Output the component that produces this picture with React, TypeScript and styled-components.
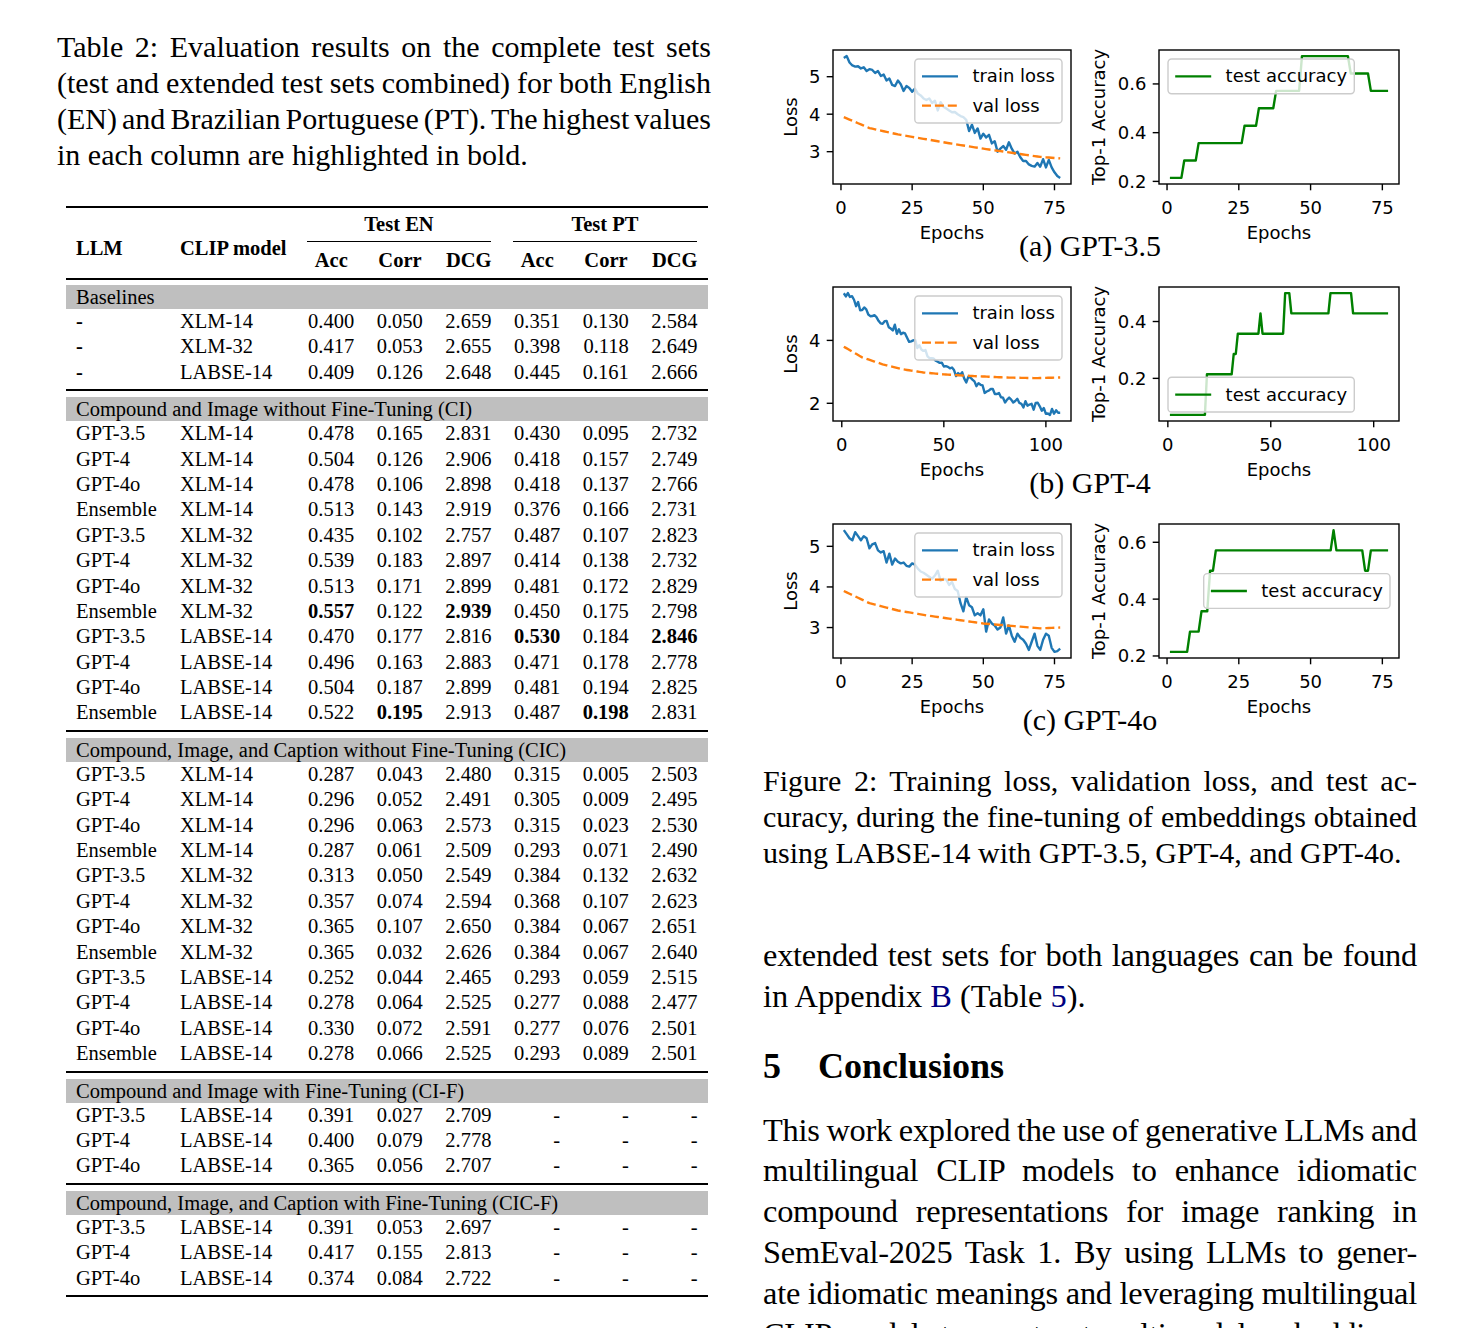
import React from "react";
import styled, { createGlobalStyle } from "styled-components";

const GlobalStyle = createGlobalStyle`
  html, body { margin: 0; padding: 0; background: #ffffff; overflow: hidden; }
  body { font-family: "Liberation Serif", "Times New Roman", serif; color: #000; }
`;

/* ---------------- page layout ---------------- */

const Page = styled.div`
  display: flex;
  align-items: flex-start;
  gap: 52px;
  padding: 29px 0 0 57px;
  width: 1479px;
  height: 1328px;
  box-sizing: border-box;
  overflow: hidden;
`;

const Column = styled.div<{ $top?: number }>`
  flex: none;
  width: 654px;
  display: flex;
  flex-direction: column;
  padding-top: ${(p) => p.$top ?? 0}px;
`;

const Caption = styled.div<{ $mt?: number }>`
  font-size: 30px;
  line-height: 36px;
  margin-top: ${(p) => p.$mt ?? 0}px;
`;

const Body = styled.div<{ $mt?: number }>`
  font-size: 32.4px;
  line-height: 40.8px;
  margin-top: ${(p) => p.$mt ?? 0}px;
`;

const Line = styled.div<{ $fill?: boolean; $tight?: boolean }>`
  text-align: ${(p) => (p.$fill ? "justify" : "left")};
  text-align-last: ${(p) => (p.$fill ? "justify" : "auto")};
  word-spacing: ${(p) => (p.$fill ? "-6px" : "normal")};
  letter-spacing: ${(p) => (p.$tight ? "-0.25px" : "normal")};
`;

const Ref = styled.span`
  color: #000080;
`;

const Heading = styled.h2`
  margin: 28px 0 22px;
  display: flex;
  gap: 37px;
  font-size: 36px;
  line-height: 43px;
  font-weight: bold;
`;

/* ---------------- table ---------------- */

const TableWrap = styled.div`
  margin: 33px 0 0 9px;
  width: 642px;
  font-size: 20.5px;
`;

const Rule = styled.div<{ $h: number; $mt?: number; $mb?: number }>`
  height: ${(p) => p.$h}px;
  background: #000;
  margin-top: ${(p) => p.$mt ?? 0}px;
  margin-bottom: ${(p) => p.$mb ?? 0}px;
`;

const COLS = "104px 126px repeat(6, 1fr)";

const HeadGrid = styled.div`
  display: grid;
  grid-template-columns: ${COLS};
  grid-template-rows: 34px 36px;
  font-weight: bold;
`;

const HeadLabel = styled.div`
  grid-row: span 2;
  display: flex;
  align-items: center;
  padding: 10px 0 0 10px;
`;

const GroupCell = styled.div`
  grid-column: span 3;
  padding: 0 11px;
`;

const GroupLabel = styled.div`
  height: 100%;
  box-sizing: border-box;
  border-bottom: 1px solid #000;
  line-height: 33px;
  text-align: center;
`;

const MetricCell = styled.div`
  line-height: 36px;
  text-align: center;
  padding-left: 2px;
`;

const Band = styled.div`
  height: 24px;
  line-height: 24px;
  background: #bfbfbf;
  padding-left: 10px;
  white-space: nowrap;
`;

const Row = styled.div`
  display: grid;
  grid-template-columns: ${COLS};
  height: 25.4px;
  line-height: 25.4px;
`;

const Cell = styled.div<{ $num?: boolean; $bold?: boolean }>`
  text-align: ${(p) => (p.$num ? "right" : "left")};
  padding: ${(p) => (p.$num ? "0 10.5px 0 0" : "0 0 0 10px")};
  font-weight: ${(p) => (p.$bold ? "bold" : "normal")};
  white-space: nowrap;
`;

type Section = { title: string; rows: string[] };

const SECTIONS: Section[] = [
  {
    title: "Baselines",
    rows: [
      "*- XLM-14 0.400 0.050 2.659 0.351 0.130 2.584",
      "*- XLM-32 0.417 0.053 2.655 0.398 0.118 2.649",
      "*- LABSE-14 0.409 0.126 2.648 0.445 0.161 2.666",
    ],
  },
  {
    title: "Compound and Image without Fine-Tuning (CI)",
    rows: [
      "GPT-3.5 XLM-14 0.478 0.165 2.831 0.430 0.095 2.732",
      "GPT-4 XLM-14 0.504 0.126 2.906 0.418 0.157 2.749",
      "GPT-4o XLM-14 0.478 0.106 2.898 0.418 0.137 2.766",
      "Ensemble XLM-14 0.513 0.143 2.919 0.376 0.166 2.731",
      "GPT-3.5 XLM-32 0.435 0.102 2.757 0.487 0.107 2.823",
      "GPT-4 XLM-32 0.539 0.183 2.897 0.414 0.138 2.732",
      "GPT-4o XLM-32 0.513 0.171 2.899 0.481 0.172 2.829",
      "Ensemble XLM-32 *0.557 0.122 *2.939 0.450 0.175 2.798",
      "GPT-3.5 LABSE-14 0.470 0.177 2.816 *0.530 0.184 *2.846",
      "GPT-4 LABSE-14 0.496 0.163 2.883 0.471 0.178 2.778",
      "GPT-4o LABSE-14 0.504 0.187 2.899 0.481 0.194 2.825",
      "Ensemble LABSE-14 0.522 *0.195 2.913 0.487 *0.198 2.831",
    ],
  },
  {
    title: "Compound, Image, and Caption without Fine-Tuning (CIC)",
    rows: [
      "GPT-3.5 XLM-14 0.287 0.043 2.480 0.315 0.005 2.503",
      "GPT-4 XLM-14 0.296 0.052 2.491 0.305 0.009 2.495",
      "GPT-4o XLM-14 0.296 0.063 2.573 0.315 0.023 2.530",
      "Ensemble XLM-14 0.287 0.061 2.509 0.293 0.071 2.490",
      "GPT-3.5 XLM-32 0.313 0.050 2.549 0.384 0.132 2.632",
      "GPT-4 XLM-32 0.357 0.074 2.594 0.368 0.107 2.623",
      "GPT-4o XLM-32 0.365 0.107 2.650 0.384 0.067 2.651",
      "Ensemble XLM-32 0.365 0.032 2.626 0.384 0.067 2.640",
      "GPT-3.5 LABSE-14 0.252 0.044 2.465 0.293 0.059 2.515",
      "GPT-4 LABSE-14 0.278 0.064 2.525 0.277 0.088 2.477",
      "GPT-4o LABSE-14 0.330 0.072 2.591 0.277 0.076 2.501",
      "Ensemble LABSE-14 0.278 0.066 2.525 0.293 0.089 2.501",
    ],
  },
  {
    title: "Compound and Image with Fine-Tuning (CI-F)",
    rows: [
      "GPT-3.5 LABSE-14 0.391 0.027 2.709 - - -",
      "GPT-4 LABSE-14 0.400 0.079 2.778 - - -",
      "GPT-4o LABSE-14 0.365 0.056 2.707 - - -",
    ],
  },
  {
    title: "Compound, Image, and Caption with Fine-Tuning (CIC-F)",
    rows: [
      "GPT-3.5 LABSE-14 0.391 0.053 2.697 - - -",
      "GPT-4 LABSE-14 0.417 0.155 2.813 - - -",
      "GPT-4o LABSE-14 0.374 0.084 2.722 - - -",
    ],
  },
];

function ResultsTable() {
  return (
    <TableWrap>
      <Rule $h={2} />
      <HeadGrid>
        <HeadLabel>LLM</HeadLabel>
        <HeadLabel>CLIP model</HeadLabel>
        <GroupCell>
          <GroupLabel>Test EN</GroupLabel>
        </GroupCell>
        <GroupCell>
          <GroupLabel>Test PT</GroupLabel>
        </GroupCell>
        {["Acc", "Corr", "DCG", "Acc", "Corr", "DCG"].map((m, i) => (
          <MetricCell key={i}>{m}</MetricCell>
        ))}
      </HeadGrid>
      {SECTIONS.map((s, si) => (
        <React.Fragment key={si}>
          <Rule $h={2} $mt={si === 0 ? 0 : 4} $mb={si === 0 ? 5 : 6} />
          <Band>{s.title}</Band>
          {s.rows.map((r, ri) => (
            <Row key={ri}>
              {r.split(" ").map((c, ci) => {
                const bold = c.startsWith("*");
                return (
                  <Cell key={ci} $num={ci >= 2} $bold={bold}>
                    {bold ? c.slice(1) : c}
                  </Cell>
                );
              })}
            </Row>
          ))}
        </React.Fragment>
      ))}
      <Rule $h={2} $mt={4} />
    </TableWrap>
  );
}

/* ---------------- charts ---------------- */

const Figure = styled.svg`
  display: block;
  overflow: visible;
  flex: none;
`;

const SubCaption = styled.div`
  font-size: 30px;
  line-height: 36px;
  text-align: center;
`;

const SubFigure = styled.div<{ $mt?: number }>`
  display: flex;
  flex-direction: column;
  margin-top: ${(p) => p.$mt ?? 0}px;
`;

const AxisText = styled.text`
  font-family: "DejaVu Sans", sans-serif;
  font-size: 18px;
  fill: #000;
`;

type Series = { data: number[]; color: string; dash?: boolean };
type Loc = "ur" | "ul" | "ll" | "cr";
type LegendEntry = { label: string; color: string; dash?: boolean };
type AxesSpec = {
  fx: number;
  fw: number;
  n: number;
  xticks: number[];
  yticks: number[];
  yfmt: (v: number) => string;
  series: Series[];
  ylabel: string;
  ylabelX: number;
  legend: { loc: Loc; textW: number; entries: LegendEntry[] };
};

const FY = 10;
const FH = 134;
const LW = 2.4;
const BLUE = "#1f77b4";
const ORANGE = "#ff7f0e";
const GREEN = "#008000";

function Axes({ spec }: { spec: AxesSpec }) {
  const { fx, fw, n, xticks, yticks, yfmt, series, ylabel, ylabelX, legend } = spec;
  const fy = FY;
  const fh = FH;
  const xm = 0.05 * (n - 1);
  const xl0 = 1 - xm;
  const xl1 = n + xm;
  const all = series.flatMap((s) => s.data);
  const mn = Math.min(...all);
  const mx = Math.max(...all);
  const ym = 0.05 * (mx - mn);
  const yl0 = mn - ym;
  const yl1 = mx + ym;
  const sx = (v: number) => fx + ((v - xl0) / (xl1 - xl0)) * fw;
  const sy = (v: number) => fy + fh - ((v - yl0) / (yl1 - yl0)) * fh;

  const rows = legend.entries.length;
  const lw = 7.2 + 36 + 14.4 + legend.textW + 7.2;
  const lh = 14.4 + rows * 20.3 + (rows - 1) * 9;
  const pad = 9;
  let lx = fx + pad;
  let ly = fy + pad;
  if (legend.loc === "ur") {
    lx = fx + fw - pad - lw;
  } else if (legend.loc === "ll") {
    ly = fy + fh - pad - lh;
  } else if (legend.loc === "cr") {
    lx = fx + fw - pad - lw;
    ly = fy + fh / 2 - lh / 2;
  }

  return (
    <g>
      {series.map((s, i) => (
        <polyline
          key={i}
          points={s.data.map((v, k) => `${sx(k + 1).toFixed(2)},${sy(v).toFixed(2)}`).join(" ")}
          fill="none"
          stroke={s.color}
          strokeWidth={LW}
          strokeLinejoin="round"
          strokeDasharray={s.dash ? "9 3.9" : undefined}
        />
      ))}
      <rect x={fx} y={fy} width={fw} height={fh} fill="none" stroke="#000" strokeWidth={1.4} />
      {xticks.map((t) => (
        <g key={`x${t}`}>
          <line x1={sx(t)} x2={sx(t)} y1={fy + fh} y2={fy + fh + 6.3} stroke="#000" strokeWidth={1.4} />
          <AxisText x={sx(t)} y={fy + fh + 30} textAnchor="middle">
            {t}
          </AxisText>
        </g>
      ))}
      {yticks.map((t) => (
        <g key={`y${t}`}>
          <line x1={fx - 6.3} x2={fx} y1={sy(t)} y2={sy(t)} stroke="#000" strokeWidth={1.4} />
          <AxisText x={fx - 12.6} y={sy(t) + 6.5} textAnchor="end">
            {yfmt(t)}
          </AxisText>
        </g>
      ))}
      <AxisText x={fx + fw / 2} y={fy + fh + 55} textAnchor="middle">
        Epochs
      </AxisText>
      <AxisText
        x={0}
        y={0}
        textAnchor="middle"
        transform={`translate(${ylabelX} ${fy + fh / 2}) rotate(-90)`}
      >
        {ylabel}
      </AxisText>
      <rect
        x={lx}
        y={ly}
        width={lw}
        height={lh}
        rx={3.6}
        fill="#ffffff"
        fillOpacity={0.8}
        stroke="#cccccc"
        strokeWidth={1.4}
      />
      {legend.entries.map((e, i) => {
        const cy = ly + 7.2 + 10.15 + i * 29.3;
        return (
          <g key={e.label}>
            <line
              x1={lx + 7.2}
              x2={lx + 43.2}
              y1={cy}
              y2={cy}
              stroke={e.color}
              strokeWidth={LW}
              strokeDasharray={e.dash ? "9 3.9" : undefined}
            />
            <AxisText x={lx + 57.6} y={cy + 6}>
              {e.label}
            </AxisText>
          </g>
        );
      })}
    </g>
  );
}

const lerp = (pts: [number, number][], n: number) => {
  const out: number[] = [];
  for (let e = 1; e <= n; e++) {
    let i = 0;
    while (i < pts.length - 2 && e > pts[i + 1][0]) i++;
    const [x0, y0] = pts[i];
    const [x1, y1] = pts[i + 1];
    out.push(y0 + ((e - x0) / (x1 - x0)) * (y1 - y0));
  }
  return out;
};

const steps = (segs: [number, number][], n: number) => {
  const out: number[] = [];
  for (let e = 1; e <= n; e++) {
    let k = segs[0][1];
    for (const [from, v] of segs) if (e >= from) k = v;
    out.push(k / 14);
  }
  return out;
};

const noisy = (pts: [number, number][], n: number, amp: number, seed: number) =>
  lerp(pts, n).map((v, i) => {
    const r = Math.sin((i + 1) * 12.9898 + seed * 78.233) * 43758.5453;
    return v + (r - Math.floor(r) - 0.5) * amp;
  });

const TRAIN_A = [
  5.5, 5.55, 5.38, 5.3, 5.27, 5.28, 5.22, 5.25, 5.15, 5.2, 5.18, 5.1, 5.15, 5.02, 5.06, 4.9, 4.95, 4.78,
  4.75, 4.9, 4.8, 4.62, 4.75, 4.7, 4.6, 4.68, 4.55, 4.5, 4.42, 4.38, 4.42, 4.3, 4.36, 4.1, 4.32, 4.2, 4.15,
  4.1, 4.05, 4.06, 4.0, 3.95, 3.92, 3.85, 3.55, 3.72, 3.5, 3.62, 3.35, 3.48, 3.38, 3.45, 3.22, 3.28, 3.0,
  3.08, 3.15, 3.05, 3.25, 3.08, 2.95, 3.0, 2.85, 2.75, 2.75, 2.66, 2.62, 2.6, 2.7, 2.6, 2.8, 2.58, 2.78,
  2.58, 2.45, 2.35, 2.3,
];
const VAL_A = lerp(
  [[1, 3.92], [10, 3.63], [20, 3.46], [30, 3.33], [40, 3.2], [50, 3.08], [60, 2.97], [70, 2.86], [77, 2.82]],
  77
);
const ACC_A = steps(
  [[1, 3], [6, 4], [11, 5], [27, 6], [32, 7], [38, 8], [47, 10], [64, 9], [71, 8]],
  77
);

const TRAIN_B = noisy(
  [
    [1, 5.5], [5, 5.3], [10, 5.02], [15, 4.85], [20, 4.62], [25, 4.42], [30, 4.18], [35, 3.95], [40, 3.7],
    [45, 3.45], [50, 3.22], [55, 3.0], [60, 2.82], [65, 2.62], [70, 2.45], [75, 2.32], [80, 2.15], [85, 2.05],
    [90, 1.96], [95, 1.9], [99, 1.85], [101, 1.72], [107, 1.7],
  ],
  107,
  0.26,
  3
).map((v, i) => (i === 0 ? 5.5 : i === 106 ? 1.7 : v));
const VAL_B = lerp(
  [[1, 3.8], [10, 3.46], [20, 3.24], [30, 3.08], [40, 2.98], [50, 2.92], [60, 2.88], [70, 2.85], [80, 2.82], [95, 2.8], [107, 2.82]],
  107
);
const ACC_B = steps(
  [[1, 1], [19, 3], [32, 4], [34, 5], [45, 6], [46, 5], [57, 7], [60, 6], [79, 7], [90, 6]],
  107
);

const TRAIN_C = [
  5.4, 5.3, 5.2, 5.15, 5.35, 5.25, 5.15, 5.25, 5.2, 4.95, 5.05, 5.08, 4.9, 4.85, 4.88, 4.6, 4.82, 4.55, 4.7,
  4.62, 4.58, 4.6, 4.52, 4.5, 4.58, 4.55, 4.45, 4.38, 4.35, 4.3, 4.25, 4.2, 4.28, 4.4, 4.15, 4.2, 4.18,
  4.05, 4.12, 3.95, 3.9, 3.6, 3.4, 3.75, 3.55, 3.5, 3.3, 3.35, 3.3, 3.45, 2.9, 3.2, 3.1, 3.05, 2.95, 3.0,
  3.25, 2.85, 3.05, 2.8, 2.65, 2.85, 2.75, 2.7, 2.6, 2.45, 2.65, 2.85, 2.55, 2.45, 2.7, 2.85, 2.8, 2.5, 2.4,
  2.42, 2.48,
];
const VAL_C = lerp(
  [[1, 3.9], [10, 3.6], [20, 3.42], [30, 3.3], [40, 3.2], [50, 3.1], [60, 3.04], [70, 2.98], [77, 3.0]],
  77
);
const ACC_C = steps(
  [[1, 3], [8, 4], [12, 5], [15, 7], [17, 8], [58, 9], [59, 8], [69, 7], [71, 8]],
  77
);

const LOSS_LEGEND: LegendEntry[] = [
  { label: "train loss", color: BLUE },
  { label: "val loss", color: ORANGE, dash: true },
];
const ACC_LEGEND: LegendEntry[] = [{ label: "test accuracy", color: GREEN }];

const fmtInt = (v: number) => String(v);
const fmtAcc = (v: number) => v.toFixed(1);

type Panel = {
  label: string;
  n: number;
  xticks: number[];
  train: number[];
  val: number[];
  acc: number[];
  lossTicks: number[];
  accTicks: number[];
  accLoc: Loc;
};

const PANELS: Panel[] = [
  {
    label: "(a) GPT-3.5",
    n: 77,
    xticks: [0, 25, 50, 75],
    train: TRAIN_A,
    val: VAL_A,
    acc: ACC_A,
    lossTicks: [3, 4, 5],
    accTicks: [0.2, 0.4, 0.6],
    accLoc: "ul",
  },
  {
    label: "(b) GPT-4",
    n: 107,
    xticks: [0, 50, 100],
    train: TRAIN_B,
    val: VAL_B,
    acc: ACC_B,
    lossTicks: [2, 4],
    accTicks: [0.2, 0.4],
    accLoc: "ll",
  },
  {
    label: "(c) GPT-4o",
    n: 77,
    xticks: [0, 25, 50, 75],
    train: TRAIN_C,
    val: VAL_C,
    acc: ACC_C,
    lossTicks: [3, 4, 5],
    accTicks: [0.2, 0.4, 0.6],
    accLoc: "cr",
  },
];

function TrainingFigure({ panel, mt }: { panel: Panel; mt: number }) {
  return (
    <SubFigure $mt={mt}>
      <Figure width={654} height={188} viewBox="0 0 654 188">
        <Axes
          spec={{
            fx: 70,
            fw: 238,
            n: panel.n,
            xticks: panel.xticks,
            yticks: panel.lossTicks,
            yfmt: fmtInt,
            series: [
              { data: panel.train, color: BLUE },
              { data: panel.val, color: ORANGE, dash: true },
            ],
            ylabel: "Loss",
            ylabelX: 33.5,
            legend: { loc: "ur", textW: 82.4, entries: LOSS_LEGEND },
          }}
        />
        <Axes
          spec={{
            fx: 396,
            fw: 240,
            n: panel.n,
            xticks: panel.xticks,
            yticks: panel.accTicks,
            yfmt: fmtAcc,
            series: [{ data: panel.acc, color: GREEN }],
            ylabel: "Top-1 Accuracy",
            ylabelX: 341.5,
            legend: { loc: panel.accLoc, textW: 121.5, entries: ACC_LEGEND },
          }}
        />
      </Figure>
      <SubCaption>{panel.label}</SubCaption>
    </SubFigure>
  );
}

/* ---------------- app ---------------- */

export default function App() {
  return (
    <>
      <GlobalStyle />
      <Page>
        <Column>
          <Caption>
            <Line $fill>Table 2: Evaluation results on the complete test sets</Line>
            <Line $fill>(test and extended test sets combined) for both English</Line>
            <Line $fill>(EN) and Brazilian Portuguese (PT). The highest values</Line>
            <Line>in each column are highlighted in bold.</Line>
          </Caption>
          <ResultsTable />
        </Column>
        <Column $top={11}>
          {PANELS.map((p, i) => (
            <TrainingFigure key={p.label} panel={p} mt={i === 0 ? 0 : 13} />
          ))}
          <Caption $mt={25}>
            <Line $fill>Figure 2: Training loss, validation loss, and test ac-</Line>
            <Line $fill>curacy, during the fine-tuning of embeddings obtained</Line>
            <Line>using LABSE-14 with GPT-3.5, GPT-4, and GPT-4o.</Line>
          </Caption>
          <Body $mt={64}>
            <Line $fill $tight>extended test sets for both languages can be found</Line>
            <Line>
              in Appendix <Ref>B</Ref> (Table <Ref>5</Ref>).
            </Line>
          </Body>
          <Heading>
            <span>5</span>
            <span>Conclusions</span>
          </Heading>
          <Body>
            <Line $fill $tight>This work explored the use of generative LLMs and</Line>
            <Line $fill $tight>multilingual CLIP models to enhance idiomatic</Line>
            <Line $fill $tight>compound representations for image ranking in</Line>
            <Line $fill $tight>SemEval-2025 Task 1. By using LLMs to gener-</Line>
            <Line $fill $tight>ate idiomatic meanings and leveraging multilingual</Line>
            <Line $fill $tight>CLIP models to construct multimodal embeddings,</Line>
          </Body>
        </Column>
      </Page>
    </>
  );
}
